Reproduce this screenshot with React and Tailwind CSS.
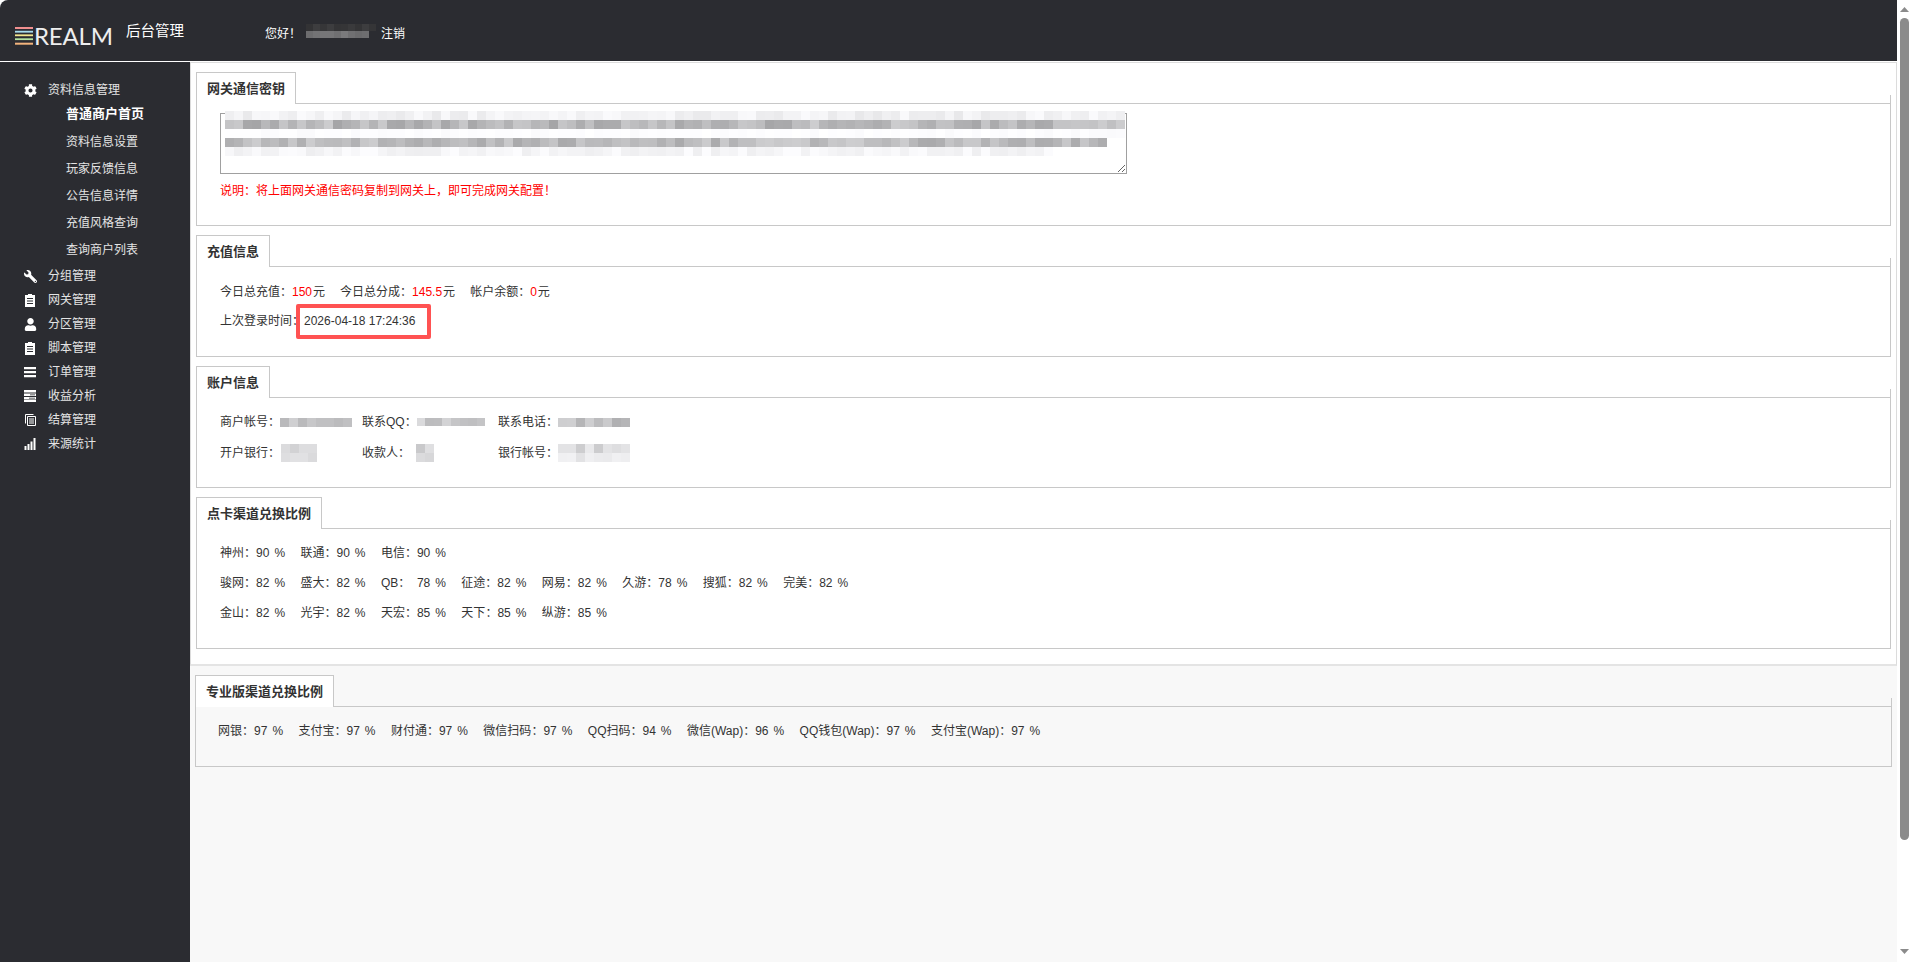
import React from "react";
import { FaCog, FaWrench, FaUser } from "react-icons/fa";

// stand-in for the blurred-out values: rows of grey cells picked from a seeded sequence
// a tone is [darkest, lightest, optional cell count for that row]
const Mosaic = ({ cols, tones, seed = 1, cell = 9, className = "" }) => {
  const rows = tones.map((tone, r) =>
    Array.from({ length: tone[2] ?? cols }, (_, c) => {
      const n = Math.abs(Math.sin(seed * 13.7 + r * 91.3 + c * 7.31) * 1000) % 1;
      const v = Math.round(tone[0] + (tone[1] - tone[0]) * n);
      return `rgb(${v},${v},${Math.min(255, v + 2)})`;
    })
  );
  return (
    <span className={`inline-flex flex-col align-middle ${className}`}>
      {rows.map((row, r) => (
        <span key={r} className="flex">
          {row.map((color, c) => (
            <span key={c} style={{ width: cell, height: cell, background: color }} />
          ))}
        </span>
      ))}
    </span>
  );
};

const ClipIcon = () => (
  <svg viewBox="0 0 14 14" className="h-[14px] w-[14px]">
    <path fill="#fff" d="M2 2h3V1h4v1h3v12H2z" />
    <path fill="#2b2c31" d="M4 5h6v1H4zM4 7.500h6v1H4zM4 10h6v1H4z" />
  </svg>
);

const BarsIcon = () => (
  <svg viewBox="0 0 14 14" className="h-[14px] w-[14px]">
    <path fill="#fff" d="M1 2h12v2.200H1zM1 6h12v2.200H1zM1 10h12v2.200H1z" />
  </svg>
);

const ListIcon = () => (
  <svg viewBox="0 0 14 14" className="h-[14px] w-[14px]">
    <path fill="#fff" d="M1 1h12v2.400H1zM1 4.600h12V7H1zM1 8h12v2.400H1zM1 11h12v2H1z" />
    <path fill="#2b2c31" d="M7 5.400h5v.8H7zM6 8.800h6v.8H6z" />
  </svg>
);

const DocIcon = () => (
  <svg viewBox="0 0 14 14" className="h-[14px] w-[14px]">
    <path fill="none" stroke="#fff" d="M2.500 10.500v-9h8M4.500 3.500h8v9h-8z" />
    <path fill="#fff" d="M6 5.500h5v1H6zM6 7.500h5v1H6zM6 9.500h5v1H6z" />
  </svg>
);

const SignalIcon = () => (
  <svg viewBox="0 0 14 14" className="h-[14px] w-[14px]">
    <path fill="#fff" d="M1.500 9h2v4h-2zM4.500 7h2v6h-2zM7.500 4.500h2V13h-2zM10.500 1h2v12h-2z" />
  </svg>
);

const subMenu = ["资料信息设置", "玩家反馈信息", "公告信息详情", "充值风格查询", "查询商户列表"];

const mainMenu = [
  { label: "分组管理", icon: <FaWrench className="-scale-x-100 text-[13px] text-white" /> },
  { label: "网关管理", icon: <ClipIcon /> },
  { label: "分区管理", icon: <FaUser className="text-[13px] text-white" /> },
  { label: "脚本管理", icon: <ClipIcon /> },
  { label: "订单管理", icon: <BarsIcon /> },
  { label: "收益分析", icon: <ListIcon /> },
  { label: "结算管理", icon: <DocIcon /> },
  { label: "来源统计", icon: <SignalIcon /> },
];

const MenuRow = ({ icon, label }) => (
  <div className="flex h-6 items-center text-[#e4e4e4]">
    <span className="flex w-[22px] justify-center">{icon}</span>
    <span className="ml-[7px]">{label}</span>
  </div>
);

const Sidebar = () => (
  <aside className="w-[190px] shrink-0 bg-[#2b2c31] pl-[19px] pt-[16px]">
    <MenuRow icon={<FaCog className="text-[13px] text-white" />} label="资料信息管理" />
    <div className="-mt-px pb-px pl-[47px]">
      <div className="flex h-[27px] items-center pb-[2px] text-[13px] font-bold text-white">普通商户首页</div>
      {subMenu.map((item) => (
        <div key={item} className="flex h-[27px] items-center text-[#e4e4e4]">
          {item}
        </div>
      ))}
    </div>
    {mainMenu.map((item) => (
      <MenuRow key={item.label} icon={item.icon} label={item.label} />
    ))}
  </aside>
);

const Panel = ({ title, className = "", bodyClass = "", children }) => (
  <div className={`flex flex-col ${className}`}>
    <div className="flex h-[31px]">
      <div className="relative z-10 h-[32px] border-x border-t border-[#c8c8c8] bg-white px-[10px] text-[13px] font-bold leading-[31px]">
        {title}
      </div>
      <div className="ml-auto mt-auto h-2 w-px bg-[#c8c8c8]" />
    </div>
    <div className={`flex-1 border border-[#c8c8c8] ${bodyClass}`}>{children}</div>
  </div>
);

const RateRow = ({ items }) => (
  <div className="flex h-5 items-center gap-[15.400px]">
    {items.map(([name, rate]) => (
      <span key={name} className="flex">
        <span className="min-w-9">{name}：</span>
        <span>{rate}</span>
        <span className="ml-[5px]">%</span>
      </span>
    ))}
  </div>
);

const Gateway = () => (
  <Panel title="网关通信密钥" className="h-[154px]" bodyClass="pl-[23px] pt-[9px]">
    <div className="relative h-[61px] w-[907px]">
      <textarea readOnly className="block h-full w-full border border-[#a0a0a0] bg-white" />
      <Mosaic
        cols={100}
        seed={3}
        className="absolute left-[5px] top-[-2px]"
        tones={[
          [232, 250],
          [165, 205],
          [250, 255],
          [170, 205, 98],
          [238, 252, 92],
        ]}
      />
    </div>
    <div className="mt-[7px] h-5 leading-5 text-[#f00]">说明：将上面网关通信密码复制到网关上，即可完成网关配置！</div>
  </Panel>
);

const Recharge = () => (
  <Panel title="充值信息" className="h-[122px]" bodyClass="pl-[23px] pt-[15px]">
    <div className="flex h-5 items-center gap-[15px]">
      <span>今日总充值：<span className="mr-px text-[#f00]">150</span>元</span>
      <span>今日总分成：<span className="mr-px text-[#f00]">145.5</span>元</span>
      <span>帐户余额：<span className="mr-px text-[#f00]">0</span>元</span>
    </div>
    <div className="mt-[9px] flex h-5 items-center">
      上次登录时间：
      <span className="relative">
        2026-04-18 17:24:36
        <span className="absolute -left-2 -top-[8px] h-[35px] w-[135px] rounded-[2px] border-4 border-[#ff5252]" />
      </span>
    </div>
  </Panel>
);

const Account = () => (
  <Panel title="账户信息" className="h-[122px]" bodyClass="pl-[23px] pt-[14px]">
    <div className="flex h-5 items-center">
      <span className="flex w-[142px] items-center">
        商户帐号：<Mosaic cols={8} seed={4} tones={[[176, 216]]} />
      </span>
      <span className="flex w-[136px] items-center">
        联系QQ：<Mosaic cols={8} seed={5} cell={8.6} tones={[[178, 218]]} />
      </span>
      <span className="flex items-center">
        联系电话：<Mosaic cols={8} seed={6} tones={[[176, 222]]} />
      </span>
    </div>
    <div className="mt-[11px] flex h-5 items-center">
      <span className="flex w-[142px] items-center">
        开户银行：<span className="w-px" />
        <Mosaic cols={4} seed={7} tones={[[205, 225], [215, 235]]} />
      </span>
      <span className="flex w-[136px] items-center">
        收款人：<span className="w-[6px]" />
        <Mosaic cols={2} seed={8} tones={[[190, 230], [215, 235]]} />
      </span>
      <span className="flex items-center">
        银行帐号：<Mosaic cols={8} seed={9} tones={[[200, 235], [226, 242]]} />
      </span>
    </div>
  </Panel>
);

const CardRates = () => (
  <Panel title="点卡渠道兑换比例" className="h-[152px]" bodyClass="flex flex-col gap-[10px] pl-[23px] pt-[14px]">
    <RateRow items={[["神州", "90"], ["联通", "90"], ["电信", "90"]]} />
    <RateRow
      items={[
        ["骏网", "82"], ["盛大", "82"], ["QB", "78"], ["征途", "82"],
        ["网易", "82"], ["久游", "78"], ["搜狐", "82"], ["完美", "82"],
      ]}
    />
    <RateRow items={[["金山", "82"], ["光宇", "82"], ["天宏", "85"], ["天下", "85"], ["纵游", "85"]]} />
  </Panel>
);

const ProRates = () => (
  <Panel title="专业版渠道兑换比例" className="h-[92px]" bodyClass="pl-[22px] pt-[14px]">
    <RateRow
      items={[
        ["网银", "97"], ["支付宝", "97"], ["财付通", "97"], ["微信扫码", "97"],
        ["QQ扫码", "94"], ["微信(Wap)", "96"], ["QQ钱包(Wap)", "97"], ["支付宝(Wap)", "97"],
      ]}
    />
  </Panel>
);

const Scrollbar = () => (
  <div className="flex w-[15px] shrink-0 flex-col items-center bg-white pt-[7px]">
    <svg viewBox="0 0 9 5" className="h-[5px] w-[9px]">
      <path fill="#8b8b8b" d="M4.500 0 9 5H0z" />
    </svg>
    <div className="mt-[6px] h-[822px] w-[9px] rounded-[5px] bg-[#8b8b8b]" />
    <svg viewBox="0 0 9 5" className="mt-[109px] h-[5px] w-[9px]">
      <path fill="#8b8b8b" d="M0 0h9L4.500 5z" />
    </svg>
  </div>
);

const App = () => {
  return (
    <div className="flex h-screen overflow-hidden bg-white font-['Liberation_Sans','Noto_Sans_CJK_SC',sans-serif] text-[12px] text-[#333]">
      <div className="flex min-w-0 flex-1 flex-col">
        <header className="mb-px flex h-[61px] shrink-0 items-start rounded-tl-lg bg-[#2b2c31] pl-[15px] text-white">
          <div className="flex w-[111px] pt-[27px]">
            <svg viewBox="0 0 18 18" className="h-[18px] w-[18px] shrink-0">
              <rect x="0" y="0" width="18" height="2" fill="#f08f8f" />
              <rect x="0" y="3.800" width="18" height="1.800" fill="#a8dcee" />
              <rect x="0" y="7.400" width="18" height="1.800" fill="#f3e58e" />
              <rect x="0" y="11.300" width="18" height="1.800" fill="#b4e3a0" />
              <rect x="0" y="15.700" width="18" height="2" fill="#f3b47d" />
            </svg>
            <span className="ml-px font-['Lato',sans-serif] text-[24px] font-normal leading-[18px] tracking-[-0.2px] text-[#eee]">
              REALM
            </span>
          </div>
          <span className="pt-[21px] text-[14.500px] leading-5">后台管理</span>
          <span className="ml-[81px] pt-[24px] leading-5">您好！</span>
          <Mosaic
            cols={10}
            cell={7}
            seed={2}
            className="ml-[5px] mt-[24px]"
            tones={[[50, 62], [104, 130, 9]]}
          />
          <span className="ml-[5px] pt-[24px] leading-5">注销</span>
        </header>
        <div className="flex min-h-0 flex-1">
          <Sidebar />
          <main className="min-w-0 flex-1 bg-[#f8f8f8]">
            <section className="flex flex-col gap-[9px] border-x border-b-2 border-t border-x-[#dcdcdc] border-b-[#e4e4e4] border-t-[#dcdcdc] bg-white px-[5px] pb-[15px] pt-[9px]">
              <Gateway />
              <Recharge />
              <Account />
              <CardRates />
            </section>
            <div className="px-[5px] pt-[9px]">
              <ProRates />
            </div>
          </main>
        </div>
      </div>
      <Scrollbar />
    </div>
  );
};

export default App;
